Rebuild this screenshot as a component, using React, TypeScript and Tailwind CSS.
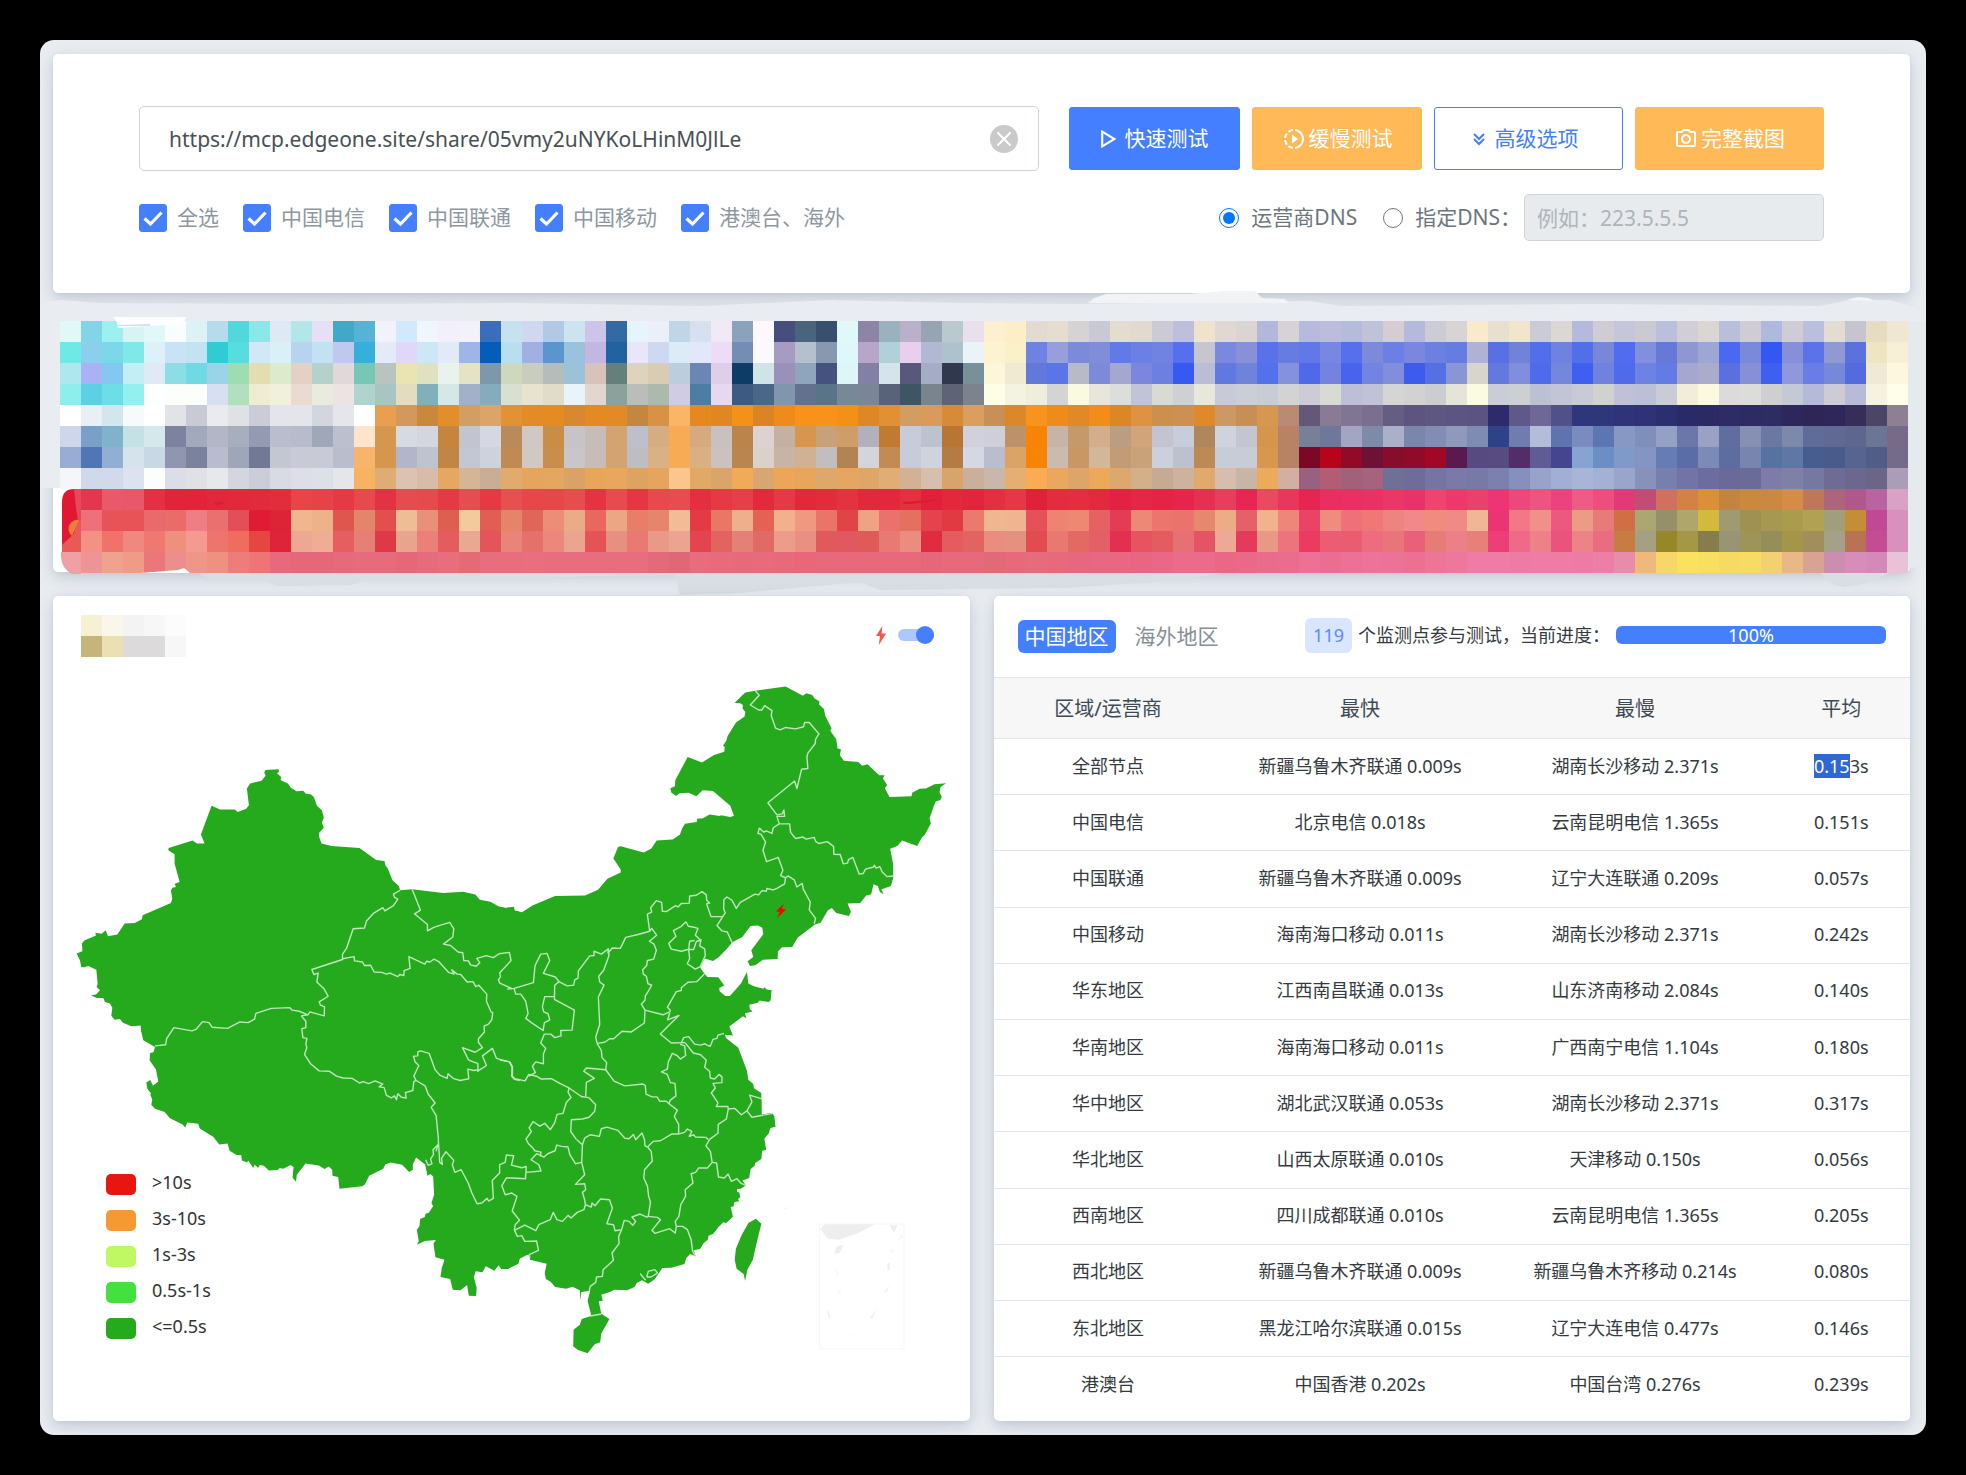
import { useState, type ReactNode } from "react";
import { BiChevronsDown } from "react-icons/bi";
import { MdOutlineCameraAlt, MdSlowMotionVideo } from "react-icons/md";

const CARD =
  "rounded-[5px] bg-white shadow-[0_7px_30px_rgba(30,50,90,0.05),0_5px_13px_rgba(30,50,80,0.14),0_1px_4px_rgba(30,50,80,0.05)]";

/* One string per mosaic row, one colour per 21px cell; "-" leaves a cell empty. */
const MOSAIC = [
  "e0f8f8 82d5e6 9cf0f0 d6f4f6 e0f8f8 fafdff dcf2f6 b5dbee 50d8dc 8ae8e8 dde9f5 b2e6e8 e8dff6 40a9c8 56b2d6 f2f2fb d2e8fd f0f6fe f2f0fa f2f2fb 3a6ebc c5e3ef d0d8f0 afc9e6 cce3f1 cdc5e9 316ba6 e6f5fb ebeff9 c0d6e6 d6e0ee f0eaf6 8ba2bd fdf8ff 474e7c 49647d 384f6d e0f8fa 8e84a8 9ab2bc bab0ca 96a4b4 b8cacd e8e0ec fdf0d0 fceec8 e3dad2 e4ddd0 d6d3d4 c9c9d5 e3ddd0 e2d9cf cdcad8 bdbfdc efe4cb e2d8d3 dad5d3 b3b7db d6d2d5 b6bade bbbddc b5bbdc bfc3da d4cdd4 b5badc cdcbd6 d8d3d5 f8eaca e7dfcf f1e6cb cbcbd7 dcd7d3 b5b9dc cfccd6 c6c6da cacad5 babfdc d2ced5 dbd6d2 b9bedb cfccd6 afb8dd cecdd6 b9bfdd e3dcd1 c6c5cf e6dcc2 f0e7d3",
  "6eeae6 8acfec 7cd8e8 80e8e6 ddf1f8 c8e2f6 c3e3f3 30ccd4 56dde0 d2e8f6 d8f0f6 b8d3ee c2e2f3 bfc8ef 36b0da e4eaf8 e0d8f8 cee7f6 e2eaf8 9fb5e7 065cbb b8def0 a0b0e3 5b95cd 9bc2dc c2b6e3 2063a0 e9e6fa cdd8f1 dcebf8 e3e7fa ecdcf6 748db5 fbf9ff a69cc2 b6c0cc 8799ae dff7fa b8a6ca b2d1d6 e7cfed b0b8d3 adc2cd eaf4f6 fdf3d0 faf1c8 6e82e2 979edb 7c8ada 7f8dda 6279e8 6b7fe5 7082e2 556fee c6c5d0 7a88dd 8891d8 5972ea 677be0 6078e8 7887e1 566fec 7d8ad8 6c7fe4 7b87de 6c80e2 667ce1 afb1d5 5870e1 7182d9 536eeb 7081e0 536ee9 7987d9 526cf0 818fdd 6679d6 8f97d0 9ea6d6 4a69ef 7a89da 3456f2 868fd7 5b72e9 9199d2 5a72df efe5c1 f8f0d6",
  "aee8ee aab2f6 84c8f2 c4eef6 e0eaf6 8adee4 70dae4 9ad4e8 9edcb2 e2deb2 dcebcc e3d1c5 b4d1cb dfdad9 76c7b6 b8c4bd eae4b0 e0e1c0 eaf2ee e4e4c4 7e97ad ced8bd caccbe b3bebb 9cc2da d7c3b9 65807a ded4bd d9ccb3 bbcedd 6b86b4 dfceea 0d3c67 d0e4e8 9a90b9 8fa4bd 45527f dff6f9 8280a4 d5e3eb 5a577c a5acc6 30384d 789199 fdf6d8 f0ead3 6379da 5a75e8 b8bac8 7c8ad8 a4a8d0 7a87dd 6b80e1 3559f2 bbbdd7 6078df 6f82dc 5570eb 8491dd 5069e9 7383df 4864ec 7283e1 808edc 3d5cee 5570e5 8a95d6 d7d5cc 6479de 808edb 506bea 7586dd 3f5ff0 7082df 4f6bec 6e82e2 637be4 a4a8d1 aaaccb 5b70de 8790d7 3f5ff0 8f98da 687de6 7588d9 546be0 f0e9d3 fef7df",
  "8eeeec 5ed0e4 6edee6 94f0ee fdfeff fcfefc fcfefc d6e0f2 b2dfbe eeecd2 f0f0dc e9dbd2 e8ebde ede3e3 b0d3cd a7c6c2 e4dcc1 82b0b9 d6e8e6 a2b0c9 86abbd dae0cf e6e3cf e0dcc8 e9f4f9 e1d7cf 8ba19b bbbdba abbaad d0cce3 4c7da2 e6d8f1 3b5b82 496887 8196ad 63718f 597387 778896 7a8697 586279 405564 7a848c 5f6474 7c838c fefee6 f4f2e0 efeedb d4d4d2 fafae0 e8e6da dcded9 c1c4d6 d8dad3 cfd0d3 e7e7da c9cad7 cbced7 c8ccd5 d3d3d4 cccbd6 dadad4 bdbfd6 c1c2d5 d5d5d4 d2d2d2 cccdd1 e4e5d8 fbfbe1 cacdd5 cdcfd2 bbc0d5 c3c5d6 c8cbd5 d1d2d0 c0c1d8 bcc0d6 c9ccd5 f0eedb fbfae1 dcdbd9 dcdcd8 cfcfd2 c5c8d6 b5bad8 cccbd6 b7bbd7 f5f3df fefeea",
  "ffffff e8eff6 d2e6ec f6fafa ffffff e2e3e7 c8cad6 e9ebee dfe1e5 cacdd8 e4e5ea e4e5ea d2d6df e5e6eb ffffff e8a050 d2985c c9883c e28e2a d49e62 dca466 e29134 e38b25 e48b22 d8892f e58923 e28a25 c3873f d99245 fab566 e68820 e08722 f3911a db8423 ef8b1b f8921b f8921b f29018 dd8725 e19134 d39c61 d99b5b d88b36 db9e5f c88f56 dc8729 f8931e ed8b1b e18924 f28d1a dd8625 df9242 cd904c ce9052 df8928 cc9964 c78f54 d69850 b98a74 635877 8a7b95 817594 7b6f8f 665e82 5d5580 5e5781 5c5584 5b5381 2e2b6c 5f588b 6e6797 50508a 2e377c 2d377a 2f347a 2f3277 2c2f6f 2b2a69 2b2a67 2d2c66 2c2b64 2d2c63 2c285b 2f2658 2f2659 362d58 4b4566 8e7f92",
  "cdd6ea 7aa0c8 80b2cc c4e2e6 d5e8ec 7c829f a3a9bd b2b6c6 a7afbf 949ab1 b9bdcd b7bbcb a0a7b9 bbbfce fde5cd d5964e d6dae3 d3d6df c6843d c2c5cf d5d8e2 b98b5b d2c8c3 cb8c45 c8c3c6 c6bdb8 d3a470 bebfcb d6ad81 f8ab55 d6aa7e c9c1c0 bb844b dcd3d1 c5b1a2 d8954c c8a177 cf9d67 b1b0bb c17a31 c8ccda bdc2d0 b77634 d0d1dc cfcfda bd9269 f88405 c8b4a6 c5996a d2ae8b bb9d82 d1a47a c3c4cf c8cddb b0865c d0d3de c3c5d0 d5954c b78265 788099 6e789b a2a6c2 7e8aa9 abb0ca 7a86ac 818db3 8f99bc 7e8bb3 2d4389 6f7dae b3bcd8 5e74af 7a8cbf 5d76b1 8698c3 7e8fb9 94a0c4 6a77a8 9ba1c3 606e9f 8590b3 6a78a4 7d89ab 606c98 5f6994 5c668f 6b7694 776a88",
  "98acd4 5076b6 92aed2 d5e3ed c8d8e4 9096b0 7b829e b8bccc a0a6b9 727995 c3c7d2 c8cad7 c8cbd6 b9bdcc f8b46b d6964e b1b6c8 bec3d0 c28643 c3c6d3 ced2dc c08a53 d0c8c2 ca8e4c c9c6c9 c8bcb8 d3a470 bebdc4 dab184 f8ab55 d9b081 cbc2c0 b9864f dad1ca c8b4a6 d0b193 c2bdbe b38352 d4d4dc c18b53 c8ccda d0d3de b47c44 d5d8e2 babdcd dba365 f88405 cabbb1 c89764 d4b698 c19c77 c9a27a ccd0dd bdc1ce bc8a54 c8ccd8 c8ccd7 d7974e b88267 7a0826 b6041a 920a28 6e1235 880c2c 920a2a a00823 5a194f 574a80 574b80 532c68 5f5b95 45448e 87a3d2 6b8ec5 7f9ac9 8495c4 657db4 5a6da7 7b8ab6 5d6d9f 7886af 5572a0 5f77a5 485d8f 495b8b 56648f 505d87 746a89",
  "f4f6fa cfd9e9 d0daea dce2f0 fcfdfc dbdee6 e0e1e5 e7e8ec d3d6df cbcdd9 d9dbe4 dddee7 dce0e8 e4e6ea f8b362 dfac76 dcc2b0 d7bcaa e6a762 d4b696 c9ae97 e2ab6e e5a55f e5a65f daa266 e9a55a e8a75c dea261 e5a55f fbc68b e2a865 dba56a f0aa58 d9a671 eda658 e8a65b dfa769 e6a662 dfa667 e1ac75 d2b196 d8beac d8a46c cab09a cab7ab e6ae70 faac54 eaa85e dda569 eea859 dba96e d4b088 c6ab94 cdb29d e1a96c d7bdae c7b5a7 ecaa5b d2afa0 99617f b25d73 a36079 a5637e 706f98 706c99 7674a3 7a79a7 7979a8 7b80ae 8690bc 99a2c9 a2afd4 a8b5d7 a3b1d5 99a5ca 8791bb 767fae 7274a7 6d6ca0 6a6999 6b6b99 7d7ca8 7f80a5 7578a0 6e6c95 6b678e 6b6689 ab9db6",
  "- e33750 e8596a e85868 e42f44 e0243a e1243a e2263b e2283a e12a3b e22d3c e84549 e64248 e43a45 e64a4c e33243 e54c50 e54a4d e43a46 e64d50 e53945 e65051 e8474a e64749 e64d4e e43442 e64c4d e43643 e7494c e94c50 e32f3f e53a43 e63f4a e22a3c e53945 e2293a e22c3c e33240 e2293b e3273d e3313f e1213a e3283c e1253c e33040 e53744 e0213a e32d3e e42d3f e12a3d e42142 e52647 e42345 e5264a e53050 e93e5b e72654 e94a5f e8375a e62553 ea2e60 ea2f62 e93163 ea3765 ea326a ee4470 ec386a ea406c ed3474 ec487c ed5480 ec427d ed5c86 ed4e7e e23a79 c24d74 d2705e d28244 db9038 c38440 cb893d cc8841 d68c48 be7858 ab667e b0588c b963a0 d8a2c2",
  "- ee7078 e85358 e85358 ea6a6c ea6c69 ed7e84 ea7070 e44e58 e01c34 dd2436 f0b68e eeb288 de564e e3856a e3504c efbd95 e8907a de5f50 f3ca9b e05e54 e4856a e1665a ec8d78 eaac86 ea675f eba783 e97e68 e4856c f2bc96 e33a43 ea7666 f0af8c e36254 f1b18c f09880 ea7468 e14446 efa284 ea716c e67060 e4424d e23a42 ea7b6c f0b690 f0b590 e65058 ef8372 ee8872 e66262 e43c54 ee8876 ec766e ea736c e6886e eeac86 e6606a f0b38d ef8678 ea4366 ef8c7e ef7078 ef7776 ee8480 f28888 ef8c7e f08a84 f0b695 ec3474 f27888 f09088 eb597e eb9c82 e87a78 d06e44 aca772 969066 aea66a d2bb3c 9f9a70 9f9152 a69850 a99c4c b0a252 a09e7c c48e38 c04894 d890bc",
  "- f49084 f17268 f08880 ef7870 ef907e f49a90 f0746e ef6c5e e64640 dd2438 eca892 efae94 e65e60 e58074 df3846 e8a48c ea8078 e55c5e e9a890 e3555a e98478 e6706a ea887c eba490 e45456 e89080 e87a72 ea9888 eaa490 e34450 e1645e e58076 e26a64 ec9c88 ea9082 e05a5c e25860 e05a58 e87a74 ea8c7e e02c40 e55c60 e26460 ea8c7e e69080 e04c50 e87870 e26a62 e46066 e33050 e65462 e25c60 e67074 e45466 ecaa96 e53a5c ea9886 ec747c ea3c60 ec5c74 ea5c70 ee6c80 e9747a ea6078 e57c76 ec8088 e68078 ed3e78 ee6a88 ee8088 ea547c ec8486 ea6c80 c77c42 a5a084 968828 a49846 867c4c 989474 9c9458 968e58 a49648 a28e5c a5a088 b97256 c44c94 d890bc",
  "- ef9494 efa28e f09a88 ea787a ed8e8c f09688 f09080 ee7c7a ee7478 e86880 e4687a e4687a e56a7c e66b7c e66b7c e46878 e66b7c e86e7e e46a76 e86e7e e86e7e e96f7f e86d7e e86d7e e86d7e e86d7e e86d7e e26a79 e06876 e96b7e e86a7c e66a7a e86a7c e66a7a e8687a e8687c e8697c e8687c e8687c e8687c e7677a e8687c e8687c e26a76 e8697c e66b7d e8687e e86780 e86782 e86782 e86684 ea6887 eb6b8a eb6b8a ea6886 eb6888 ea6b8c ea6c8e ef7096 ec6d92 ed7096 ee7399 ed7297 ec7094 ee7498 ee789c ef7ca4 ef7ca4 ee7ba4 ef7ca4 ee7ca4 ee7ba4 ed7ea6 e98bab f0b97c f6d768 fae25e f8df60 f6db62 f7db62 f3d070 eab786 d9a393 cb8eb0 d78cba d48ab8 e9c2d8",
].map((row) => row.split(" "));

function MosaicBanner() {
  return (
    <svg viewBox="53 308 1857 264" className="block h-auto w-full overflow-visible" aria-hidden="true">
      <path d="M40 303 L60 300 L100 303 L340 304 L520 303 L700 306 L830 300 L960 303 L1075 304 L1310 301 L1340 306 L1600 304 L1820 306 L1850 300 L1890 300 L1910 306 L1926 312 V322 H60 V488 L40 488 Z" fill="#e9edf1" />
      <path d="M1088 303 L1094 298 L1106 294 L1190 294 L1225 291 L1255 291 L1262 298 L1284 299 L1290 303 Z" fill="#f1f3f5" />
      <path d="M1846 300 L1858 297 L1868 298 L1875 301 Z" fill="#f4f6f8" />
      <path d="M1908 321 H1926 V565 L1908 569 Z" fill="#e5eaee" />
      <path d="M192 570 L210 579 L255 578 L278 586 L350 585 L378 578 L510 579 L600 576 L675 575 L680 595 L740 593 L860 582 L880 590 L1068 588 L1180 580 L1230 572 Z" fill="#d9dee5" />
      <path d="M1820 572 L1830 583 L1842 587 L1862 584 L1890 573 Z" fill="#d9dee5" />
      {MOSAIC.map((row, r) => (
        <g key={r} shapeRendering="crispEdges">
          {row.map((c, i) =>
            c === "-" ? null : <rect key={i} x={60 + i * 21} y={321 + r * 21} width={21} height={21} fill={`#${c}`} />,
          )}
        </g>
      ))}
      <path d="M62 552 V502 Q62 489 74 489 H81 V552 Z" fill="#e01832" />
      <path d="M74 489 H81 V552 H62 V545 L74 534 L78 521 L76 508 Z" fill="#e5495a" />
      <path d="M77 521 H81 V552 H62 V545 L74 534 Z" fill="#e85a56" />
      <path d="M79 520 A9 9 0 0 0 72 536 Z" fill="#ef7c3e" />
      <path d="M61 552 H81 V574 H72 Q61 568 61 556 Z" fill="#f0a0a4" />
      <path d="M113 317 H187 L184 321 L180 324 L150 326 L118 328 L117 322 Z" fill="#ffffff" />
      <path d="M118 325 L150 324 L150 326 L118 326 Z" fill="#c8e6ee" />
      <path d="M214 503 L224 502 L222 504 L216 505 Z" fill="#e01832" />
      <path d="M902 502 L930 500 L938 498 L934 501 L912 504 L904 504 Z" fill="#e01832" />
      <path d="M140 573 L178 570 L184 568 L190 573 Z" fill="#ffffff" />
    </svg>
  );
}

const NW_LAND =
  "528,1567 525,1562 480,1536 475,1523 442,1520 436,1534 428,1525 390,1508 374,1490 345,1481 334,1470 337,1455 331,1442 333,1438 322,1425 319,1408 331,1401 339,1417 355,1405 348,1371 329,1345 330,1326 341,1322 345,1308 310,1289 303,1262 302,1248 274,1250 249,1240 240,1230 224,1232 214,1221 217,1198 210,1186 195,1182 190,1171 170,1171 153,1163 168,1161 180,1149 170,1140 173,1130 169,1092 145,1081 133,1085 124,1085 120,1066 110,1046 127,1040 126,1018 133,1010 168,996 166,988 185,991 197,981 204,998 232,993 254,962 284,961 306,950 308,939 393,905 397,893 393,870 397,862 408,860 404,851 419,846 404,794 404,768 385,757 386,751 458,730 471,738 494,738 483,713 515,632 540,643 585,643 593,650 619,641 627,631 621,584 631,570 665,562 677,548 673,539 677,532 716,530 718,537 711,541 724,552 722,560 744,570 753,582 770,592 790,590 798,599 812,600 822,608 831,632 846,645 852,665 846,680 852,694 838,708 838,720 845,738 875,745 959,751 1009,784 1034,787 1037,800 1044,808 1058,841 1077,857 1081,869 1117,866 1210,877 1270,873 1307,881 1320,896 1352,901 1376,914 1398,919 1422,915 1424,926 1440,930 1440,1567";

const NW_BORDERS = [
  "1081,869 1061,880 1064,889 1074,894 1061,912 1035,927 1029,918 1002,933 980,955 974,975 940,977 920,1032 908,1048 908,1063 816,1091 822,1105 835,1101 831,1126 853,1146 865,1166 838,1182 842,1191 854,1196 853,1221 810,1210 804,1218 784,1221",
  "804,1218 778,1208 757,1205 750,1198 694,1200 648,1214 644,1230 625,1240 600,1238 563,1256 517,1253 507,1240 488,1237 468,1259 456,1263 402,1254 396,1262 380,1285 377,1302 345,1305",
  "784,1221 798,1236 798,1254 786,1257 789,1282 801,1284 798,1300 801,1310 794,1329 812,1355 838,1375 868,1376 890,1390 910,1395 937,1396 959,1409 970,1405 986,1411 1006,1403 1029,1412 1018,1420 1033,1422 1040,1444 1055,1451 1064,1445 1070,1456 1074,1439 1085,1449 1099,1451 1097,1436 1119,1430 1122,1405 1129,1402",
  "908,1061 943,1055 944,1067 968,1070 974,1080 992,1079 1003,1098 1026,1099 1040,1104 1051,1101 1074,1111 1080,1105 1092,1108 1093,1094 1111,1088 1107,1055 1155,1076 1160,1068 1170,1070 1183,1062 1198,1070 1226,1099 1243,1104 1236,1092 1252,1104 1263,1105 1282,1126 1300,1125 1308,1139 1317,1135 1341,1160 1340,1180 1354,1210 1359,1212 1356,1232 1346,1244 1333,1250 1334,1266 1316,1285 1316,1295 1328,1310 1306,1323 1268,1310 1286,1344 1300,1350 1314,1354 1315,1372 1302,1374 1284,1370 1287,1397 1261,1402 1240,1396 1225,1383 1222,1396 1200,1387 1186,1372 1168,1326 1142,1319 1134,1322 1134,1333 1121,1334 1126,1350 1137,1360 1122,1390 1129,1402",
  "1312,1377 1340,1360 1328,1333 1358,1312 1370,1340 1409,1350 1417,1365 1416,1390 1424,1399 1440,1402",
  "1129,1402 1156,1417 1165,1440 1186,1465 1174,1477 1189,1500 1196,1567",
  "1117,866 1142,925 1124,935 1163,965 1163,983 1182,973 1198,968 1230,959 1242,977 1239,1000 1211,1020 1232,1024 1255,1042 1269,1044 1272,1066 1286,1067 1292,1078 1309,1082 1320,1072 1311,1060 1340,1052 1361,1058 1378,1047 1409,1043 1414,1066 1380,1100 1382,1112 1376,1120 1380,1129 1417,1145",
];

const NE_LAND =
  "0,1567 0,916 18,919 43,915 44,926 67,931 98,912 166,885 256,884 295,868 323,837 363,819 363,811 341,780 355,748 363,746 432,763 455,752 471,730 519,727 541,713 547,697 556,683 591,678 593,668 608,668 630,657 660,661 664,659 692,664 703,660 692,632 640,591 609,589 590,606 567,596 540,597 529,605 515,595 512,583 526,578 527,560 564,496 607,511 643,490 674,481 675,467 670,464 680,450 684,437 709,399 735,382 737,370 729,360 730,350 722,345 705,344 737,315 767,310 858,298 910,324 920,317 938,322 945,332 960,340 958,348 973,361 977,380 996,415 992,422 1010,446 1014,472 1024,474 1021,491 1033,506 1076,510 1088,520 1104,516 1139,547 1155,547 1150,556 1163,574 1156,583 1170,608 1236,606 1238,596 1260,585 1279,584 1305,572 1340,569 1323,580 1320,595 1327,607 1322,617 1309,620 1304,630 1290,668 1294,682 1275,715 1268,720 1253,745 1208,730 1193,745 1172,753 1181,797 1181,835 1174,857 1145,867 1153,880 1141,874 1135,857 1122,852 1115,880 1100,884 1082,905 1044,906 1054,929 1048,941 1010,933 997,919 985,925 963,960 946,965 894,1002 878,1028 847,1029 835,1041 834,1062 790,1064 767,1079 751,1081 744,1068 761,1056 755,1037 791,992 788,974 775,968 753,969 728,1000 698,1015 682,1033 657,1057 640,1067 625,1063 615,1060 602,1086 613,1101 623,1112 656,1113 674,1136 659,1143 660,1152 677,1165 691,1165 724,1130 742,1098 746,1130 763,1138 791,1145 795,1141 801,1147 816,1149 813,1177 808,1182 780,1178 774,1184 749,1190 751,1203 759,1209 736,1214 740,1228 730,1222 689,1251 700,1276 675,1274 680,1284 716,1310 742,1375 746,1400 761,1412 763,1424 785,1437 786,1497 820,1494 827,1530 812,1535 808,1550 792,1567";

const NE_BORDERS = [
  "767,310 779,323 752,350 777,364 787,364 795,352 817,366 815,380 828,415 842,420 858,413 888,417 912,411 915,399 929,399 958,431 948,446 947,458 925,485 922,495 925,528 906,530 892,584 885,563 805,624 832,658 848,655 853,644 855,662 832,662 839,683",
  "839,683 870,683 873,707 888,724 910,720 920,726 944,721 948,732 958,738 983,733 1002,746 1003,768 1022,769 1031,795 1044,793 1047,783 1060,777 1079,824 1091,822 1098,810 1122,804 1124,799 1130,807 1141,803 1148,818 1163,831 1181,829",
  "839,683 821,694 817,710 800,703 792,706 779,695 775,710 784,712 798,734 790,757 801,789 836,777 850,813 843,828 858,834",
  "858,834 865,829 884,840 892,860 908,850 911,866 932,902 929,924 948,948 944,963",
  "858,834 855,851 832,864 821,868 802,864 800,872 787,870 777,882 766,880 722,903 710,920 697,897 682,888 673,895 672,922 677,932 652,968 667,983 683,986 697,1015",
  "670,943 634,943 621,907 630,905 621,897 620,882 607,873 590,883 570,885 569,905 545,906 535,916 528,912 500,929 488,928 486,903 470,898 453,918 456,930 443,936 450,984",
  "450,984 456,976 471,995 449,1012 463,1020 470,1037 462,1062 443,1066 441,1080 429,1092 431,1104 440,1110 445,1131 456,1135 447,1150 437,1165 436,1177 425,1188 436,1205",
  "450,984 415,993 378,1001 362,1032 338,1031 325,1045 326,1033 305,1048 283,1040 283,1052 270,1053 236,1095 235,1115 225,1120 222,1135 202,1137 178,1125 167,1112 131,1102 150,1066 142,1046 123,1048 106,1080 101,1128 43,1144 22,1146",
  "326,1040 328,1052 312,1093 297,1110 300,1126 313,1135 296,1168 300,1245 288,1280 292,1298",
  "292,1298 315,1295 330,1285 342,1285 367,1264 395,1266 434,1241 436,1205",
  "436,1205 490,1218 510,1210 512,1205 503,1197 530,1153 545,1150 545,1142 565,1127 592,1125 614,1104",
  "510,1213 504,1232 538,1220 510,1245 482,1272 515,1297 556,1296",
  "545,1297 552,1282 567,1279 585,1300 603,1303 616,1299 622,1303 632,1306 640,1287 652,1284 655,1275 673,1270",
  "559,957 566,970 580,972 595,976 587,995 603,1009 590,1013 582,1035 565,1035 545,1040 515,1034 507,1018 529,998 521,982 545,970 559,957",
  "590,1013 604,1008 600,1025 615,1033 617,1052 602,1083 587,1090 563,1075 570,1060 567,1035 570,1012 585,1010",
  "178,1125 165,1135 164,1175 224,1205 217,1261 183,1262 184,1277 165,1282 153,1272 134,1272 123,1297 138,1312 131,1328 131,1355 108,1350 98,1362 107,1380 87,1390",
  "43,1144 48,1160 63,1160 78,1180 85,1215 78,1228 95,1240 130,1262 134,1240 150,1232 145,1215 132,1210 128,1195 135,1167 164,1167",
  "0,1345 30,1350 38,1363 38,1390 45,1397 76,1403 87,1385 110,1390 125,1398 155,1397 180,1410 208,1423 245,1447 267,1450",
  "292,1298 305,1318 307,1338 321,1352 318,1372 260,1367 252,1376 284,1396 260,1407 258,1447",
  "318,1372 343,1404 376,1417 430,1412 437,1416 439,1440 457,1448 472,1448 480,1460 500,1460 508,1467",
  "508,1467 512,1457 529,1445 526,1410 512,1408 503,1385 485,1378 503,1370 506,1350 518,1326 532,1332 542,1342 558,1332 555,1305 541,1300",
  "556,1296 581,1325 603,1330 620,1345 615,1365 630,1376 632,1395 645,1398 658,1385 667,1392 667,1408 640,1410 647,1423 635,1437 655,1465 650,1475 685,1475 686,1482",
  "686,1482 705,1480 725,1498 742,1487 757,1462 750,1443 785,1453",
  "742,1487 757,1505 820,1494",
  "686,1482 680,1510 656,1525 655,1550 630,1567",
  "508,1467 533,1485 524,1503 537,1525 537,1550",
  "208,1423 205,1435 214,1450 200,1463 190,1494 172,1497 165,1520 152,1540 135,1522 120,1530 100,1517 88,1535 95,1545 78,1567",
  "267,1450 288,1470 285,1488 268,1505 248,1510 215,1512 213,1545 230,1567",
];

const SW_LAND =
  "475,250 480,266 520,291 538,314 563,311 569,333 590,346 604,346 606,362 622,368 625,362 640,385 644,375 655,384 660,376 672,378 687,392 713,391 720,385 730,387 752,376 761,382 758,413 768,426 771,405 797,371 837,377 854,388 867,380 877,390 878,408 895,412 899,447 967,440 975,434 988,408 1030,387 1036,375 1052,368 1087,375 1108,397 1119,390 1119,374 1129,353 1156,374 1163,408 1172,403 1180,410 1183,465 1175,490 1180,500 1167,519 1157,522 1155,532 1141,538 1139,560 1131,570 1137,605 1131,615 1155,604 1188,601 1181,612 1187,653 1214,660 1206,685 1202,712 1231,718 1239,750 1262,752 1282,736 1287,768 1309,769 1311,745 1302,712 1308,695 1328,698 1338,680 1364,693 1377,677 1384,688 1405,688 1416,682 1435,673 1440,655 1440,250";

const SE_LAND =
  "300,180 300,676 320,672 324,657 345,645 352,650 352,660 397,672 392,700 395,718 408,726 420,742 450,747 467,741 487,752 489,783 491,757 515,753 508,783 518,828 545,822 538,785 549,783 545,765 570,756 580,750 615,752 635,742 641,730 655,722 672,732 690,718 710,685 735,684 770,673 775,655 785,643 800,650 795,632 812,628 822,610 833,600 835,588 848,582 862,562 875,548 883,550 901,531 895,502 903,500 905,487 918,485 915,478 921,473 918,458 912,457 912,448 922,447 936,437 927,422 945,415 949,388 960,378 961,370 978,358 980,333 991,331 986,296 1003,264 1016,261 1013,229 1004,220 978,226 978,180";

const ISLANDS = [
  "545,822 567,838 545,882 542,908 527,914 508,941 482,931 469,920 470,870 487,855 492,838 515,830",
  "963,537 978,552 973,575 964,615 955,660 940,690 934,724 930,703 911,687 906,660 909,627 925,585 943,550",
];

const SE_BORDERS = [
  "104,299 108,368 115,374 113,355 125,336 146,362 142,375 149,398 166,390 185,430 195,460 209,492 222,490 236,476 240,484 253,476 250,422 270,400 270,375 285,368 288,346 308,348 302,376 330,384 342,380 341,398",
  "70,360 77,377 87,372 83,358 91,345 90,330 103,315 98,335",
  "341,398 340,417 305,415 288,415 276,438 285,465 303,460 317,470 304,514 324,542 312,555 310,572",
  "341,398 382,394 376,375 355,360 370,342 390,352 400,342 420,333 424,316 438,320 455,322 460,345 475,372 492,368",
  "310,572 338,556 368,573 376,555 407,540 415,518 425,540 440,545 455,527 463,535 480,518 498,510 502,495",
  "492,368 500,405 475,434 500,432 503,450 494,458 500,480 502,495",
  "310,572 318,590 330,588 338,605 370,604 375,632 350,645 352,655",
  "502,495 518,502 520,490 528,498 543,478 567,480 575,505 560,552 578,555 582,573 600,570",
  "600,570 592,590 593,612 574,640 578,662 550,690 548,710 532,712 530,728 515,740 512,755",
  "600,570 607,542 620,545 630,557 638,545 628,532 650,523 668,532 672,530",
  "670,322 680,335 683,364 662,390 660,415 670,440 673,470 678,487 672,530",
  "672,530 697,533 705,540 682,572 690,581 730,567 745,580 748,560",
  "748,560 765,560 778,570 788,600 792,635 800,650",
  "845,368 832,385 808,385 800,398 788,402 793,430 772,450 773,470 760,495 755,530 745,545 748,560",
  "845,368 857,370 862,412 878,415 888,403 897,425 912,417 922,430 936,437",
  "838,299 828,318 840,335 845,368",
  "670,322 685,305 705,303 735,283 753,283 770,278 778,268 790,275 783,290 795,285 800,292 828,293 835,300",
  "494,315 500,295 515,285 540,290 545,267 560,262 590,272 608,295 620,297 632,284 638,300 655,280 662,300 663,318 670,322",
  "478,299 494,315 492,368",
  "341,297 348,312 360,325 365,333 382,337 380,350",
  "668,712 672,695 690,690 697,700 680,712 668,712",
  "650,702 665,722",
  "515,829 545,823",
];

const INSET_SHAPES = [
  "1137,568 1150,554 1285,554 1240,580 1188,600 1158,597",
  "1325,557 1346,557 1337,580",
  "1182,620 1200,615 1190,640 1175,643",
  "1319,670 1325,670 1325,692 1319,692",
  "1348,602 1360,582 1358,592 1350,602",
  "1326,642 1335,625 1333,635",
  "1178,682 1187,707 1184,706",
  "1180,768 1196,745 1190,758",
  "1310,758 1324,738 1318,756",
  "1270,838 1291,805 1278,835",
  "1156,813 1160,815 1165,836 1161,834",
  "1219,887 1240,876 1228,884",
  "1038,508 1047,502 1045,509",
];

function Region({ transform, land, borders }: { transform: string; land: string[]; borders: string[] }) {
  return (
    <g transform={transform}>
      {land.map((p) => (
        <polygon key={p} points={p} fill="#25aa1e" />
      ))}
      {borders.map((p) => (
        <polyline key={p} points={p} fill="none" stroke="#bfe6bd" strokeWidth="1.4" strokeLinejoin="round" vectorEffect="non-scaling-stroke" />
      ))}
    </g>
  );
}

function ChinaMap() {
  return (
    <svg viewBox="53 670 917 751" className="block h-auto w-full" role="img" aria-label="中国地区测速地图">
      <Region transform="translate(40 1040) scale(0.33333)" land={[SW_LAND]} borders={[]} />
      <Region transform="translate(400 1040) scale(0.3699 0.33333)" land={[SE_LAND, ...ISLANDS]} borders={[]} />
      <Region transform="translate(40 580) scale(0.33333 0.35714)" land={[NW_LAND]} borders={[]} />
      <Region transform="translate(500 580) scale(0.33333 0.35714)" land={[NE_LAND]} borders={NE_BORDERS} />
      <Region transform="translate(40 580) scale(0.33333 0.35714)" land={[]} borders={NW_BORDERS} />
      <Region transform="translate(400 1040) scale(0.3699 0.33333)" land={[]} borders={SE_BORDERS} />
      <g transform="translate(400 1040) scale(0.3699 0.33333)">
        <rect x="1135" y="553" width="229" height="375" fill="none" stroke="#f6f6f6" vectorEffect="non-scaling-stroke" />
        {INSET_SHAPES.map((p) => (
          <polygon key={p} points={p} fill="#eeeeee" />
        ))}
      </g>
      <path d="M784 904 L776.5 911.5 L780 912.5 L777.5 918 L786.5 910 L782.5 909 Z" fill="#ff0000" />
    </svg>
  );
}

const LEGEND = [
  { color: "bg-[#e81611]", label: ">10s" },
  { color: "bg-[#f79933]", label: "3s-10s" },
  { color: "bg-[#bff863]", label: "1s-3s" },
  { color: "bg-[#43e03e]", label: "0.5s-1s" },
  { color: "bg-[#25aa1e]", label: "<=0.5s" },
];

const LOGO_CELLS = [
  "bg-[#f7f1d4]", "bg-[#faf7ea]", "bg-[#f3f3f4]", "bg-[#f7f7f7]", "bg-[#fcfcfc]",
  "bg-[#c5b57c]", "bg-[#ebe0b4]", "bg-[#dcdadb]", "bg-[#dcdadb]", "bg-[#f7f7f7]",
];

function MapCard() {
  const [on, setOn] = useState(true);
  return (
    <section className={`relative min-w-0 flex-1 ${CARD}`}>
      <header className="flex h-[74px] items-start justify-between pt-[19px] pr-9 pl-7">
        <div className="grid grid-cols-5" aria-hidden="true">
          {LOGO_CELLS.map((c, i) => (
            <span key={i} className={`size-[21px] ${c}`} />
          ))}
        </div>
        <label className="flex h-10 items-center gap-3">
          <svg viewBox="0 0 10 19" className="h-[19px] w-[10px]" aria-label="闪电">
            <path d="M6.4 0 L0 10 H4 L2.8 19 L10 7.6 H5.6 Z" fill="#ff5050" />
          </svg>
          <span className="grid w-9 items-center">
            <input
              type="checkbox"
              checked={on}
              onChange={() => setOn(!on)}
              aria-label="闪电标记"
              className="peer col-start-1 row-start-1 h-3 w-full appearance-none rounded-full bg-[#aec7ff]"
            />
            <span className="pointer-events-none col-start-1 row-start-1 size-[18px] justify-self-start rounded-full bg-[#447fff] peer-checked:justify-self-end" />
          </span>
        </label>
      </header>
      <ChinaMap />
      <ul className="absolute bottom-[77px] left-[53px] flex flex-col">
        {LEGEND.map((l) => (
          <li key={l.label} className="flex h-9 items-center text-lg text-[#333]">
            <span className={`mt-1.5 mr-4 h-[21px] w-[30px] rounded-[5px] ${l.color}`} />
            {l.label}
          </li>
        ))}
      </ul>
    </section>
  );
}

const ROWS = [
  ["全部节点", "新疆乌鲁木齐联通 0.009s", "湖南长沙移动 2.371s", "0.153s"],
  ["中国电信", "北京电信 0.018s", "云南昆明电信 1.365s", "0.151s"],
  ["中国联通", "新疆乌鲁木齐联通 0.009s", "辽宁大连联通 0.209s", "0.057s"],
  ["中国移动", "海南海口移动 0.011s", "湖南长沙移动 2.371s", "0.242s"],
  ["华东地区", "江西南昌联通 0.013s", "山东济南移动 2.084s", "0.140s"],
  ["华南地区", "海南海口移动 0.011s", "广西南宁电信 1.104s", "0.180s"],
  ["华中地区", "湖北武汉联通 0.053s", "湖南长沙移动 2.371s", "0.317s"],
  ["华北地区", "山西太原联通 0.010s", "天津移动 0.150s", "0.056s"],
  ["西南地区", "四川成都联通 0.010s", "云南昆明电信 1.365s", "0.205s"],
  ["西北地区", "新疆乌鲁木齐联通 0.009s", "新疆乌鲁木齐移动 0.214s", "0.080s"],
  ["东北地区", "黑龙江哈尔滨联通 0.015s", "辽宁大连电信 0.477s", "0.146s"],
  ["港澳台", "中国香港 0.202s", "中国台湾 0.276s", "0.239s"],
];

function ResultCard() {
  return (
    <section className={`min-w-0 flex-1 ${CARD}`}>
      <header className="flex h-[81px] items-center justify-between px-6">
        <nav className="flex gap-3 text-[21px] leading-[33px] whitespace-nowrap">
          <button type="button" className="h-[33px] rounded-md bg-[#447fff] px-[7px] text-white">中国地区</button>
          <button type="button" className="h-[33px] px-[7px] text-[#868e96]">海外地区</button>
        </nav>
        <div className="flex items-center pb-[3px] text-lg whitespace-nowrap text-[#343a40]">
          <span className="mr-1.5 rounded-md bg-[#dae5ff] px-2 leading-[35px] text-[#5a8cf8]">119</span>
          <span>个监测点参与测试，当前进度：</span>
          <div
            role="progressbar"
            aria-valuenow={100}
            aria-label="当前进度"
            className="ml-1.5 h-[18px] w-[270px] rounded-md bg-[#447fff] text-center leading-[18px] text-white"
          >
            100%
          </div>
        </div>
      </header>
      <table className="h-[736px] w-full table-fixed border-t border-[#dee5ea] text-center text-[#343a40]">
        <thead className="bg-[#f7f7f7] text-xl text-[#3d4a55]">
          <tr className="h-[61px] border-b border-[#dee5ea]">
            <th scope="col" className="w-[25%] pt-0.5 font-normal">区域/运营商</th>
            <th scope="col" className="w-[30%] pt-0.5 font-normal">最快</th>
            <th scope="col" className="w-[30%] pt-0.5 font-normal">最慢</th>
            <th scope="col" className="w-[15%] pt-0.5 font-normal">平均</th>
          </tr>
        </thead>
        <tbody className="text-lg">
          {ROWS.map((r, i) => (
            <tr key={r[0]} className="h-14 border-b border-[#dee5ea] last:border-b-0">
              <td className="pb-0.5">{r[0]}</td>
              <td className="pb-0.5">{r[1]}</td>
              <td className="pb-0.5">{r[2]}</td>
              <td className="pb-0.5">
                {i === 0 ? (
                  <>
                    <span className="bg-[#3067d6] text-white">0.15</span>3s
                  </>
                ) : (
                  r[3]
                )}
              </td>
            </tr>
          ))}
        </tbody>
      </table>
    </section>
  );
}

function ActionButton({ className, children }: { className: string; children: ReactNode }) {
  return (
    <button type="button" className={`flex h-[63px] items-center justify-center rounded-[3px] border whitespace-nowrap ${className}`}>
      {children}
    </button>
  );
}

function SearchCard() {
  const [url, setUrl] = useState("https://mcp.edgeone.site/share/05vmy2uNYKoLHinM0JlLe");
  const [dns, setDns] = useState("isp");
  return (
    <section className={`px-[86px] py-[52px] text-[21px] ${CARD}`}>
      <div className="flex items-center gap-[30px]">
        <div className="flex h-[65px] min-w-0 flex-1 items-center rounded-[5px] border border-[#ced2d9] pr-5 pl-[29px]">
          <input
            type="text"
            aria-label="测试网址"
            value={url}
            onChange={(e) => setUrl(e.target.value)}
            className="min-w-0 flex-1 pt-0.5 text-[#495057] outline-none"
          />
          <button type="button" aria-label="清除" onClick={() => setUrl("")}>
            <svg viewBox="0 0 28 28" className="size-7">
              <circle cx="14" cy="14" r="14" fill="#cacaca" />
              <path d="M8 8 L20 20 M20 8 L8 20" stroke="#fff" strokeWidth="2" strokeLinecap="round" />
            </svg>
          </button>
        </div>
        <div className="flex gap-3">
          <ActionButton className="w-[171px] gap-[9px] border-[#447fff] bg-[#447fff] text-white">
            <svg viewBox="0 0 15 18" className="h-[18px] w-[15px]" aria-hidden="true">
              <path d="M1.2 1.6 V16.4 L13.4 9 Z" fill="none" stroke="currentColor" strokeWidth="2.1" strokeLinejoin="miter" />
            </svg>
            快速测试
          </ActionButton>
          <ActionButton className="w-[170px] gap-[3px] border-[#ffb957] bg-[#ffb957] text-white">
            <MdSlowMotionVideo className="size-6" aria-hidden="true" />
            缓慢测试
          </ActionButton>
          <ActionButton className="w-[189px] gap-1 border-[#447fff] bg-white pr-3 text-[#447fff]">
            <BiChevronsDown className="size-6" aria-hidden="true" />
            高级选项
          </ActionButton>
          <ActionButton className="w-[189px] gap-[3px] border-[#ffb957] bg-[#ffb957] text-white">
            <MdOutlineCameraAlt className="size-6" aria-hidden="true" />
            完整截图
          </ActionButton>
        </div>
      </div>
      <div className="mt-[23px] flex h-[47px] items-center justify-between">
        <div className="flex gap-6 text-[#8e979f]">
          {["全选", "中国电信", "中国联通", "中国移动", "港澳台、海外"].map((name) => (
            <label key={name} className="flex items-center gap-2.5 whitespace-nowrap">
              <span className="grid">
                <input
                  type="checkbox"
                  defaultChecked
                  className="peer col-start-1 row-start-1 size-7 appearance-none rounded-[3px] border border-[#447fff] checked:bg-[#447fff]"
                />
                <svg viewBox="0 0 28 28" className="pointer-events-none invisible col-start-1 row-start-1 size-7 peer-checked:visible" aria-hidden="true">
                  <path d="M5.5 14.5 L11.5 20 L22.5 8.5" fill="none" stroke="#fff" strokeWidth="3.2" />
                </svg>
              </span>
              {name}
            </label>
          ))}
        </div>
        <div className="flex items-center text-[#6c757d]">
          <label className="flex items-center gap-3 whitespace-nowrap">
            <input type="radio" name="dns" className="size-5 accent-[#0075ff]" checked={dns === "isp"} onChange={() => setDns("isp")} />
            运营商DNS
          </label>
          <label className="mr-[3px] ml-[26px] flex items-center gap-3 whitespace-nowrap">
            <input type="radio" name="dns" className="size-5" checked={dns === "custom"} onChange={() => setDns("custom")} />
            指定DNS：
          </label>
          <input
            type="text"
            aria-label="指定DNS地址"
            disabled={dns === "isp"}
            placeholder="例如：223.5.5.5"
            className="h-[47px] w-[300px] rounded-[5px] border border-[#ced4da] bg-[#e8ebee] px-3 placeholder:text-[#adb5bd]"
          />
        </div>
      </div>
    </section>
  );
}

export default function App() {
  return (
    <div className="min-h-screen bg-black p-10 font-['Noto_Sans','Noto_Sans_CJK_SC',sans-serif]">
      <main className="overflow-hidden rounded-[14px] bg-[#e9edf2] pt-3.5 pr-4 pb-3.5 pl-[13px]">
        <SearchCard />
        <div className={`mt-[15px] ${CARD}`}>
          <MosaicBanner />
        </div>
        <div className="mt-6 flex gap-6">
          <MapCard />
          <ResultCard />
        </div>
      </main>
    </div>
  );
}
